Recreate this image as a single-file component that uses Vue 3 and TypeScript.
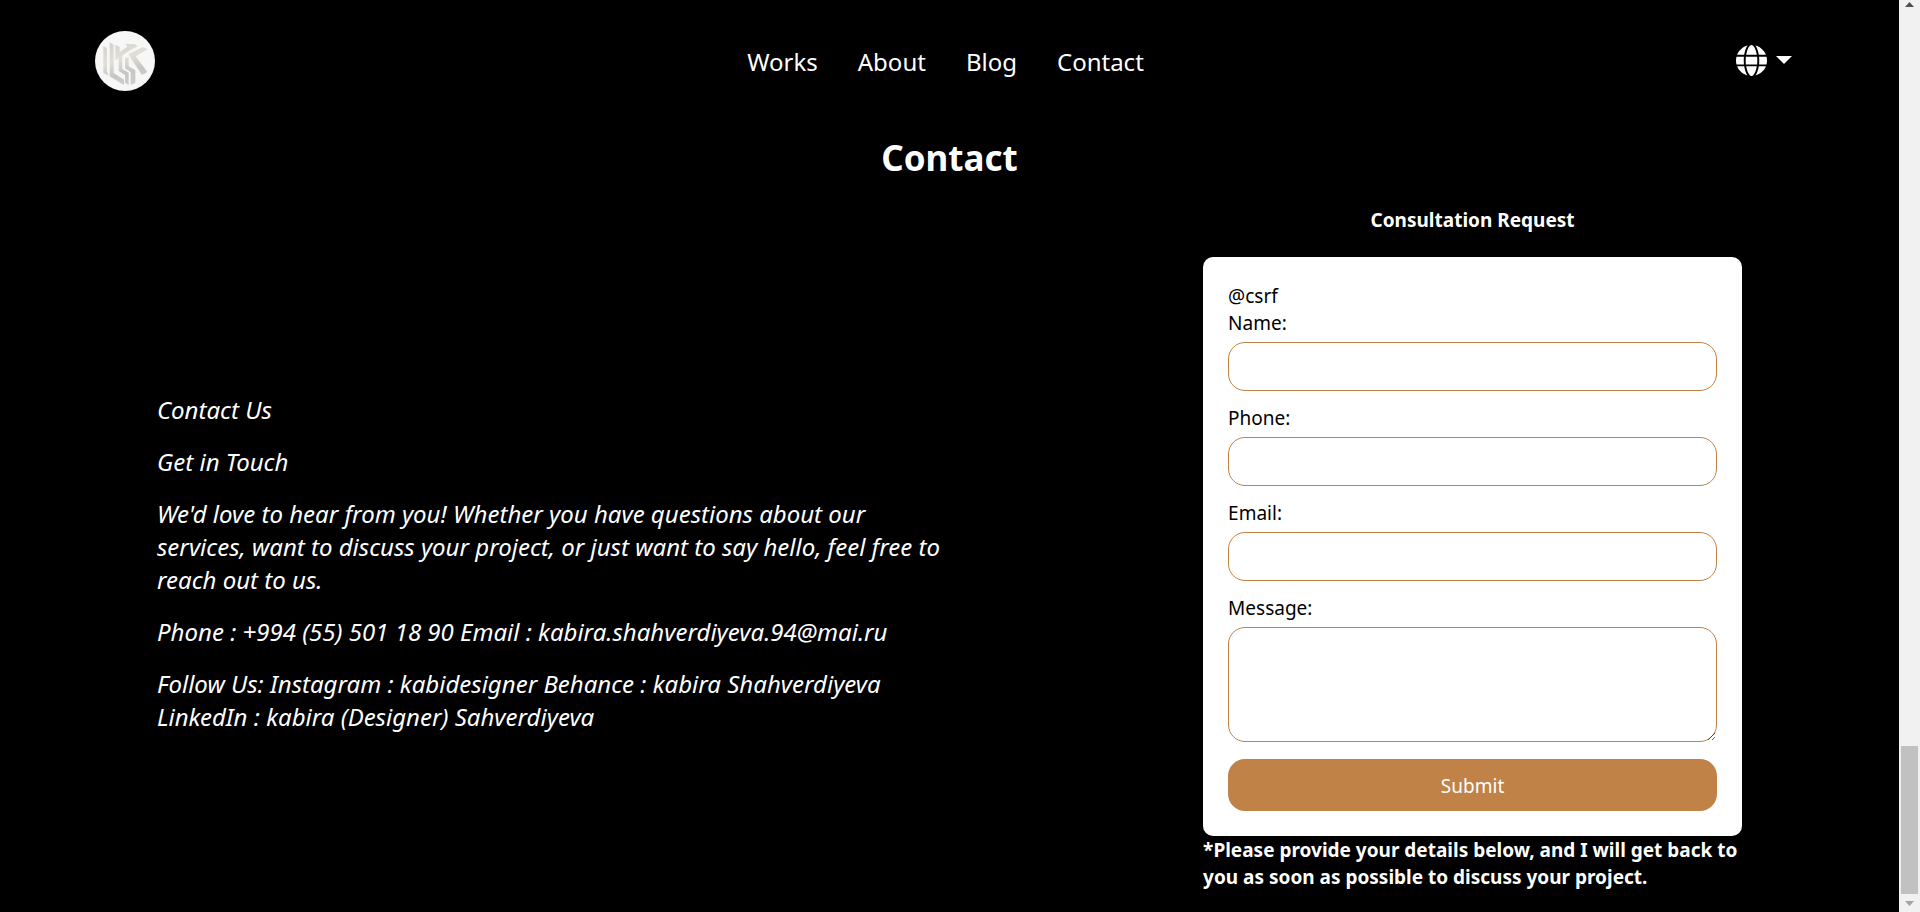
<script setup lang="ts">
import { reactive } from 'vue'

interface Field {
  id: 'name' | 'phone' | 'email'
  label: string
  type: string
}

const links: string[] = ['Works', 'About', 'Blog', 'Contact']

const fields: Field[] = [
  { id: 'name', label: 'Name:', type: 'text' },
  { id: 'phone', label: 'Phone:', type: 'tel' },
  { id: 'email', label: 'Email:', type: 'email' },
]

const paragraphs: string[] = [
  'Contact Us',
  'Get in Touch',
  "We'd love to hear from you! Whether you have questions about our services, want to discuss your project, or just want to say hello, feel free to reach out to us.",
  'Phone : +994 (55) 501 18 90 Email : kabira.shahverdiyeva.94@mai.ru',
  'Follow Us: Instagram : kabidesigner Behance : kabira Shahverdiyeva LinkedIn : kabira (Designer) Sahverdiyeva',
]

const form = reactive({ name: '', phone: '', email: '', message: '' })
</script>

<template>
  <div class="shell">
    <div class="page">
      <header class="navbar">
        <a class="brand" href="#" aria-label="Home">
          <svg viewBox="0 0 180 180" width="60" height="60">
            <defs>
              <linearGradient id="metal" gradientUnits="userSpaceOnUse" x1="60" y1="30" x2="100" y2="165">
                <stop offset="0" stop-color="#d2d2cf" />
                <stop offset="0.4" stop-color="#e2e0d4" />
                <stop offset="0.7" stop-color="#c6c6c4" />
                <stop offset="1" stop-color="#cfcec8" />
              </linearGradient>
            </defs>
            <circle cx="90" cy="90" r="90" fill="#f7f7f7" />
            <g fill="url(#metal)">
              <path d="M25 45 36 51V120L40 134 25 125Z" />
              <path d="M44 34 56 41V126L87 146V162L44 136Z" />
              <path d="M61 41 74 48V63L97 47 92 38 120 40 128 46 105 58 61 88Z" />
              <path d="M100 70 144 48 158 55 122 76 157 123 141 132Z" />
              <path d="M71 80 82 74V114L101 125V162L90 155V132L71 120Z" />
              <path d="M90 82 101 78V106L121 118V156L107 161V123L90 112Z" />
            </g>
          </svg>
        </a>
        <nav class="links" aria-label="Main">
          <a v-for="link in links" :key="link" href="#">{{ link }}</a>
        </nav>
        <button class="language" type="button" aria-label="Language">
          <svg viewBox="0 0 512 512" width="31" height="31" fill="currentColor">
            <path
              d="M352 256c0 22.2-1.2 43.6-3.3 64H163.3c-2.2-20.4-3.3-41.8-3.3-64s1.2-43.6 3.3-64H348.7c2.2 20.4 3.3 41.8 3.3 64zm28.8-64H503.9c5.3 20.5 8.1 41.9 8.1 64s-2.8 43.5-8.1 64H380.8c2.1-20.6 3.2-42 3.2-64s-1.1-43.4-3.2-64zm112.6-32H376.7c-10-63.9-29.8-117.4-55.3-151.6c78.3 20.7 142 77.5 171.9 151.6zm-149.1 0H167.7c6.1-36.4 15.5-68.6 27-94.7c10.5-23.6 22.2-40.7 33.5-51.5C239.4 3.2 248.7 0 256 0s16.6 3.2 27.8 13.8c11.3 10.8 23 27.9 33.5 51.5c11.6 26 20.9 58.2 27 94.7zm-209 0H18.6C48.6 85.9 112.2 29.1 190.6 8.4C165.1 42.6 145.3 96.1 135.3 160zM8.1 192H131.2c-2.1 20.6-3.2 42-3.2 64s1.1 43.4 3.2 64H8.1C2.8 299.5 0 278.1 0 256s2.8-43.5 8.1-64zM194.7 446.6c-11.6-26-20.9-58.2-27-94.6H344.3c-6.1 36.4-15.5 68.6-27 94.6c-10.5 23.6-22.2 40.7-33.5 51.5C272.6 508.8 263.3 512 256 512s-16.6-3.2-27.8-13.8c-11.3-10.8-23-27.9-33.5-51.5zM135.3 352c10 63.9 29.8 117.4 55.3 151.6C112.2 482.9 48.6 426.1 18.6 352H135.3zm358.1 0c-30 74.1-93.6 130.9-171.9 151.6c25.5-34.2 45.2-87.7 55.3-151.6H493.4z"
            />
          </svg>
          <svg viewBox="0 0 16 8" width="16" height="8" fill="currentColor">
            <path d="M0 0H16L8 8Z" />
          </svg>
        </button>
      </header>

      <main>
        <h1>Contact</h1>
        <div class="columns">
          <section class="info">
            <p v-for="text in paragraphs" :key="text">{{ text }}</p>
          </section>

          <section class="request">
            <h2>Consultation Request</h2>
            <form class="card" @submit.prevent>
              <div>@csrf</div>
              <div v-for="field in fields" :key="field.id" class="field">
                <label :for="field.id">{{ field.label }}</label>
                <input :id="field.id" v-model="form[field.id]" :type="field.type" />
              </div>
              <div class="field">
                <label for="message">Message:</label>
                <textarea id="message" v-model="form.message"></textarea>
              </div>
              <button class="submit" type="submit">Submit</button>
            </form>
            <p class="note">
              *Please provide your details below, and I will get back to you as soon as possible to
              discuss your project.
            </p>
          </section>
        </div>
      </main>
    </div>

    <div class="scrollbar" aria-hidden="true">
      <svg class="arrow" viewBox="0 0 9 5" width="9" height="5"><path fill="#505050" d="M0 5H9L4.5 0Z" /></svg>
      <div class="track"><div class="thumb"></div></div>
      <svg class="arrow" viewBox="0 0 9 5" width="9" height="5"><path fill="#a3a3a3" d="M0 0H9L4.5 5Z" /></svg>
    </div>
  </div>
</template>

<style>
body {
  margin: 0;
  background: #000;
}
</style>

<style scoped>
.shell {
  display: flex;
  min-height: 100vh;
  background: #000;
  color: #fff;
  font-family: 'Segoe UI', 'Noto Sans', sans-serif;
  font-size: 19px;
  line-height: 27px;
}

.shell * {
  box-sizing: border-box;
}

.page {
  flex: 1;
  min-width: 0;
}

.navbar {
  display: flex;
  justify-content: space-between;
  align-items: center;
  height: 122px;
  padding: 0 5%;
}

.brand {
  display: flex;
}

.links {
  display: flex;
  gap: 40px;
  padding-top: 2px;
}

.links a {
  color: #fff;
  font-size: 24px;
  line-height: 36px;
  text-decoration: none;
}

.language {
  display: flex;
  align-items: center;
  gap: 9px;
  padding: 0 12px 2px 0;
  border: 0;
  background: none;
  color: #fff;
}

h1 {
  margin: 12px 0 25px;
  font-size: 35px;
  line-height: 48px;
  font-weight: 700;
  text-align: center;
}

.columns {
  display: flex;
  justify-content: space-between;
  align-items: center;
  padding: 0 157px 20px;
}

.info {
  width: 50%;
  padding-top: 28px;
  font-size: 24px;
  line-height: 33px;
  font-style: italic;
}

.info p {
  margin: 0 0 19px;
}

.info p:last-child {
  margin-bottom: 0;
}

.request {
  width: 34%;
}

h2 {
  margin: 0 0 23px;
  font-size: 19px;
  line-height: 27px;
  font-weight: 700;
  text-align: center;
}

.card {
  padding: 26px 25px 25px;
  border-radius: 10px;
  background: #fff;
  color: #000;
}

.field {
  display: flex;
  flex-direction: column;
  gap: 5px;
  margin-bottom: 14px;
}

input,
textarea {
  width: 100%;
  height: 49px;
  padding: 10px 12px;
  border: 1px solid #c08247;
  border-radius: 17px;
  background: #fff;
  color: #000;
  font: inherit;
}

textarea {
  height: 115px;
  resize: vertical;
}

.submit {
  display: block;
  width: 100%;
  height: 52px;
  margin-top: 17px;
  padding: 2px 0 0;
  border: 0;
  border-radius: 17px;
  background: #c08247;
  color: #fff;
  font: inherit;
}

.note {
  margin: 0;
  padding-top: 1px;
  font-weight: 700;
}

.scrollbar {
  position: sticky;
  top: 0;
  display: flex;
  flex-direction: column;
  align-items: center;
  width: 21px;
  height: 100vh;
  padding: 2px 0 6px;
  box-sizing: border-box;
  background: #f1f1f1;
}

.track {
  flex: 1;
  display: flex;
  align-items: flex-end;
  padding-bottom: 7px;
}

.thumb {
  width: 17px;
  height: 148px;
  background: #c1c1c1;
}
</style>
